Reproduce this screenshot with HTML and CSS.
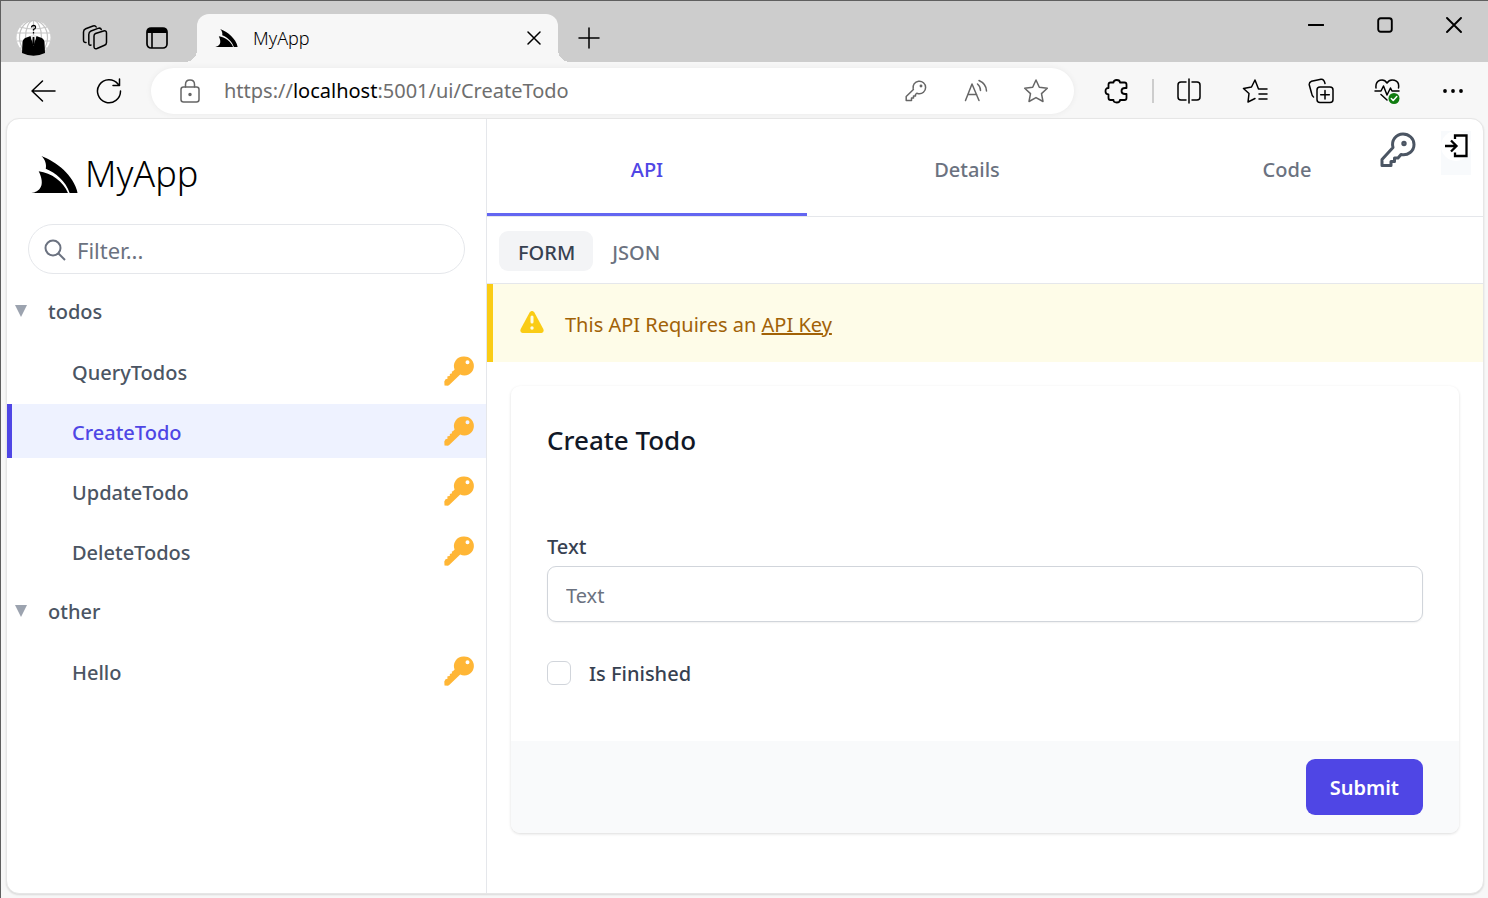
FILE: index.html
```html
<!DOCTYPE html>
<html lang="en">
<head>
<meta charset="utf-8">
<title>MyApp</title>
<link rel="stylesheet" href="styles.css">
</head>
<body>
<svg class="defs" aria-hidden="true">
  <symbol id="fin" viewBox="0 0 138 110"><path d="M30 0C75 18 125 55 138 110H114C103 75 72 50 43 38C46 25 41 10 30 0Z"/><path d="M22 45C60 50 95 75 109 110H0C25 106 43 88 22 45Z"/></symbol>
  <symbol id="key" viewBox="0 0 30 30"><path fill="#ffb636" fill-rule="evenodd" d="M19.500 0.500A9.500 9.500 0 0 0 10.600 13.600L9 15.200L7.800 15.500L8 17.300L5.800 17.900L5.900 19.700L3.300 20.400L3.500 22.700L1.500 23.300L.3 25.500L.5 29.500L4 29.700L5.500 28.800L16.200 18.500A9.500 9.500 0 1 0 19.500 .5ZM23.500 4.200a2 2 0 1 1 0 4a2 2 0 1 1 0-4Z"/></symbol>
</svg>
<header class="titlebar">
  <button class="strip-btn" aria-label="Profile"><svg width="35" height="36" viewBox="0 0 35 36"><circle cx="17.500" cy="17.500" r="17" fill="#fff"/><g fill="none" stroke="#c4c4c4" stroke-width="1.200"><ellipse cx="17.500" cy="17.500" rx="8" ry="17"/><ellipse cx="17.500" cy="17.500" rx="14" ry="17"/><path d="M17.500 0v35M1 13h33M1 21h33M4 7q13 4 27 0M4 28h27"/></g><path d="M6 33L6.500 22Q7 18 12 17L14.500 16L17.500 26L20.500 16L23 17Q28 18 28.500 22L29 33Q17.500 38.500 6 33Z"/><path d="M14.500 15L17.500 26L20.500 15Z" fill="#e8e8e8"/><path d="M16.700 17h1.600l.5 7l-1.300 2l-1.300-2Z"/><path d="M15.500 7.500q.2-2 2.200-2t1.800 1.900q0 1.200-2 2.100v1M17.500 12v1.500" fill="none" stroke="#000" stroke-width="1.300"/></svg></button>
  <button class="strip-btn" aria-label="Workspaces"><svg class="line" width="26" height="26" viewBox="0 0 26 26"><path d="M13.500 8.500L21.500 6Q24.500 5.200 24.500 8V17.500Q24.500 19.500 22.500 20.300L15 23.500Q12 24.500 12 21.500V11Q12 9.100 13.500 8.500ZM9 20Q6.800 21 6.800 18V9.500Q6.800 7 9 6L16 3.400Q18.600 2.500 19.300 4.500M4 17.500Q1.500 17.700 1.500 15V7Q1.500 4.700 3.700 3.800L11 1Q13.300 .3 14.200 2"/></svg></button>
  <button class="strip-btn" aria-label="Tab actions"><svg width="24" height="24" viewBox="0 0 24 24"><rect x="2" y="2" width="20" height="20" rx="4" fill="none" stroke="#000" stroke-width="1.700"/><path d="M2 7V5Q2 2 5 2H19Q22 2 22 5V7Z"/><path d="M7 7V22" stroke="#000" stroke-width="1.600"/></svg></button>
  <div class="tab">
    <svg class="tab-logo" viewBox="0 0 138 110"><use href="#fin"/></svg>
    <span class="tab-title">MyApp</span>
    <button class="tab-close" aria-label="Close tab"><svg class="line" width="14" height="14" viewBox="0 0 14 14"><path d="M1 1L13 13M13 1L1 13"/></svg></button>
  </div>
  <button class="strip-btn" aria-label="New tab"><svg class="line" width="22" height="22" viewBox="0 0 22 22"><path d="M11 1V21M1 11H21"/></svg></button>
  <div class="window-controls">
    <button aria-label="Minimize"><svg class="line bold" width="16" height="16" viewBox="0 0 16 16"><path d="M.5 8H15.500"/></svg></button>
    <button aria-label="Maximize"><svg class="line bold" width="16" height="16" viewBox="0 0 16 16"><rect x="1.200" y="1.200" width="13.600" height="13.600" rx="2.500"/></svg></button>
    <button aria-label="Close"><svg class="line bold" width="16" height="16" viewBox="0 0 16 16"><path d="M1 1L15 15M15 1L1 15"/></svg></button>
  </div>
</header>
<div class="toolbar">
  <button class="tool" aria-label="Back"><svg class="line" width="26" height="26" viewBox="0 0 26 26"><path d="M12.500 3L2 13L12.500 23M2 13H25"/></svg></button>
  <button class="tool" aria-label="Refresh"><svg class="line" width="26" height="26" viewBox="0 0 26 26"><path d="M24.500 13A11.500 11.500 0 1 1 22 6L23.500 7.500M23.500 1V7.500H17"/></svg></button>
  <div class="address">
    <svg class="line gray lock" width="20" height="24" viewBox="0 0 20 24"><rect x="1" y="8" width="18" height="15" rx="2.500"/><path d="M5.500 8V5.500Q5.500 1 10 1T14.500 5.500V8"/><circle cx="10" cy="15.500" r="1" fill="#666"/></svg>
    <div class="url" role="textbox" aria-label="Address" contenteditable="true" spellcheck="false">https://<b>localhost</b>:5001/ui/CreateTodo</div>
    <button aria-label="Passwords"><svg class="line gray" width="22" height="22" viewBox="0 0 22 22"><path d="M8.200 9A6.300 6.300 0 1 1 13.500 13.700L11.800 13.300L10.500 14.500V16H8.500V18H6.500V20.500H1.200V16.500L8.400 9.500Z"/><circle cx="16" cy="6" r=".7"/></svg></button>
    <button aria-label="Read aloud"><svg class="line gray" width="24" height="24" viewBox="0 0 24 24"><path d="M1.500 21.500L8 5L15 21.500M3.800 15.500H12.700M13.500 5Q16.500 7.500 16.500 11.500M15 1.500Q22.500 5 22.500 12"/></svg></button>
    <button aria-label="Add favorite"><svg class="line gray" width="26" height="26" viewBox="0 0 26 26"><path d="M13 2L16.300 9.200L24.300 10.200L18.500 15.600L20 23.500L13 19.600L6 23.500L7.500 15.600L1.700 10.200L9.700 9.200Z"/></svg></button>
  </div>
  <button class="tool wide" aria-label="Extensions"><svg class="line mid" width="26" height="26" viewBox="0 0 26 26"><path d="M6.500 4.500H9.500Q9.500 2 12.700 2T16 4.500H20.500Q22.500 4.500 22.500 6.500V10H21Q17.500 10 17.500 13T21 16H22.500V20Q22.500 22 20.500 22H16Q16 24.500 12.700 24.500T9.500 22H6.500Q4.500 22 4.500 20V16.500Q1.500 16.500 1.500 13.200T4.500 10V6.500Q4.500 4.500 6.500 4.500Z"/></svg></button>
  <span class="divider"></span>
  <button class="tool" aria-label="Split screen"><svg class="line" width="24" height="26" viewBox="0 0 24 26"><path d="M9 4H4Q1 4 1 7V19Q1 22 4 22H9M15 4H20Q23 4 23 7V19Q23 22 20 22H15M12 1V25"/></svg></button>
  <button class="tool" aria-label="Favorites"><svg class="line" width="26" height="26" viewBox="0 0 26 26"><path d="M25 11H16.500L13 2L9.500 9L1.500 10.500L7 15.500L6 24L13 20.500M17 16H25M17 21H25"/></svg></button>
  <button class="tool" aria-label="Collections"><svg class="line" width="26" height="26" viewBox="0 0 26 26"><rect x="9" y="9" width="16" height="15.500" rx="3"/><path d="M17 12.500V21M12.700 16.800H21.300M5.500 19Q4 18 3.500 15L1.300 7Q.8 4.300 3.500 3.300L13 1.200Q16 .8 17 5.500"/></svg></button>
  <button class="tool" aria-label="Browser essentials"><svg class="line" width="26" height="26" viewBox="0 0 26 26"><path d="M2 10C1 1 10 0 13 5C16 0 26 1 24.500 10M1 13H7L9.500 8L13 17L16.500 10L18 13H25M7 16.500L13 22"/><circle cx="20" cy="20.500" r="5.500" fill="#107c10" stroke="none"/><path d="M17.300 20.500L19.200 22.500L22.800 18.500" stroke="#fff"/></svg></button>
  <button class="tool" aria-label="Settings and more"><svg width="22" height="6" viewBox="0 0 22 6"><circle cx="3" cy="3" r="1.900"/><circle cx="11" cy="3" r="1.900"/><circle cx="19" cy="3" r="1.900"/></svg></button>
</div>
<div class="page">
  <nav class="sidebar">
    <a class="brand" href="#"><svg class="brand-logo" viewBox="0 0 138 110"><use href="#fin"/></svg><span>MyApp</span></a>
    <label class="filter">
      <svg width="22" height="22" viewBox="0 0 22 22" fill="none" stroke="#6b7280" stroke-width="2"><circle cx="9" cy="9" r="7.500"/><path d="M14.300 14.300L21 21"/></svg>
      <input type="search" placeholder="Filter..." aria-label="Filter">
    </label>
    <button class="group"><svg width="12" height="12" viewBox="0 0 12 12"><path d="M0 0H12L6 12Z"/></svg>todos</button>
    <a class="item" href="#">QueryTodos<svg class="key"><use href="#key"/></svg></a>
    <a class="item active" href="#">CreateTodo<svg class="key"><use href="#key"/></svg></a>
    <a class="item" href="#">UpdateTodo<svg class="key"><use href="#key"/></svg></a>
    <a class="item" href="#">DeleteTodos<svg class="key"><use href="#key"/></svg></a>
    <button class="group"><svg width="12" height="12" viewBox="0 0 12 12"><path d="M0 0H12L6 12Z"/></svg>other</button>
    <a class="item" href="#">Hello<svg class="key"><use href="#key"/></svg></a>
  </nav>
  <main class="main">
    <nav class="tabs">
      <a class="active" href="#">API</a>
      <a href="#">Details</a>
      <a href="#">Code</a>
    </nav>
    <div class="actions">
      <button class="api-key" aria-label="API key"><svg width="36" height="36" viewBox="0 0 36 36" fill="none" stroke="#4b5563" stroke-width="3" stroke-linejoin="round"><path d="M13 15.500C11 8.500 16 2 23 2C29 2 34 6.500 34 12.500C34 19 28 24 21 22.500L18 26H14.500V29.500H11V33.500H2V27.500Z"/><circle cx="24" cy="11.500" r="1.200"/></svg></button>
      <button class="signin" aria-label="Sign in"><svg width="30" height="30" viewBox="0 0 30 30"><circle cx="15" cy="15" r="15" fill="#fff"/><path d="M14 8V4.500H25.500V25H14V21.500M4 15H15M10 9.500L15.500 15L10 20.500" fill="none" stroke="#000" stroke-width="2.300"/></svg></button>
    </div>
    <div class="modes">
      <button class="active">FORM</button>
      <button>JSON</button>
    </div>
    <div class="alert">
      <svg width="24" height="22" viewBox="0 0 24 22"><path fill="#facc15" d="M9.600 1.400Q12-1.500 14.400 1.400L23.300 18Q24.500 21.500 21.500 22H2.500Q-.5 21.500.7 18Z"/><path d="M12 6V11" stroke="#fefce8" stroke-width="3" stroke-linecap="round"/><circle cx="12" cy="17" r="1.700" fill="#fefce8"/></svg>
      <p>This API Requires an <a href="#">API Key</a></p>
    </div>
    <form class="card">
      <div class="card-body">
        <h3>Create Todo</h3>
        <label class="field-label" for="text">Text</label>
        <input class="field" id="text" type="text" placeholder="Text">
        <div class="check"><input type="checkbox" id="done"><label for="done">Is Finished</label></div>
      </div>
      <div class="card-footer"><button type="submit">Submit</button></div>
    </form>
  </main>
</div>
</body>
</html>
```
FILE: styles.css
```css
* { box-sizing: border-box; }
body {
  margin: 0;
  min-height: 100vh;
  display: flex;
  flex-direction: column;
  background: #f7f7f7;
  border-top: 1px solid #5f5f5f;
  border-left: 1px solid #5f5f5f;
  font-family: "Noto Sans", "Open Sans", sans-serif;
  font-size: 20px;
  line-height: 30px;
  color: #000;
}
button { border: 0; padding: 0; background: none; font: inherit; color: inherit; cursor: pointer; }
a { color: inherit; text-decoration: none; }
svg { display: block; flex: none; }
.defs { position: absolute; width: 0; height: 0; }
.line { fill: none; stroke: #000; stroke-width: 1.5; stroke-linejoin: round; stroke-linecap: round; }
.line.mid { stroke-width: 1.8; }
.line.bold { stroke-width: 1.9; }
.line.gray { stroke: #666; }

.titlebar { display: flex; height: 61px; padding: 12px 0 0 1px; background: #cdcdcd; }
.strip-btn { width: 62px; display: flex; align-items: center; justify-content: center; }
.tab {
  position: relative;
  display: flex;
  align-items: center;
  width: 361px;
  margin: 1px 0 0 9px;
  padding: 0 16px 0 18px;
  background: #f7f7f7;
  border-radius: 12px 12px 0 0;
}
.tab::before, .tab::after { content: ""; position: absolute; bottom: 0; width: 12px; height: 12px; }
.tab::before { right: 100%; background: radial-gradient(circle at 0 0, #cdcdcd 12px, #f7f7f7 12px); }
.tab::after { left: 100%; background: radial-gradient(circle at 100% 0, #cdcdcd 12px, #f7f7f7 12px); }
.tab-logo { width: 23px; height: 18px; }
.tab-title { flex: 1; margin-left: 15px; font-size: 18px; font-weight: 300; }
.tab-close { padding: 1px; }
.window-controls { display: flex; height: 48px; margin: -12px 0 0 auto; }
.window-controls button { width: 69px; display: flex; align-items: center; justify-content: center; }

.toolbar { display: flex; align-items: center; height: 56px; padding: 1px 2px 0 9px; }
.tool { width: 66px; height: 46px; display: flex; align-items: center; justify-content: center; }
.tool.wide { width: 70px; }
.divider { width: 2px; height: 24px; margin-right: 2px; background: #cdcdcd; }
.address {
  flex: 1;
  display: flex;
  align-items: center;
  height: 46px;
  margin: 0 8px 0 9px;
  padding: 0 8px 0 29px;
  background: #fff;
  border-radius: 23px;
  box-shadow: 0 0 6px rgba(0, 0, 0, .06);
}
.address button { width: 60px; display: flex; justify-content: center; }
.url { flex: 1; margin-left: 24px; color: #6e6e6e; outline: none; white-space: nowrap; }
.url b { font-weight: 400; color: #000; }

.page {
  flex: 1;
  display: flex;
  margin: 0 4px 4px 5px;
  background: #fff;
  border: 1px solid #e6e6e6;
  border-radius: 13px;
  box-shadow: 0 1px 2px rgba(0, 0, 0, .12);
  overflow: hidden;
}
.sidebar { width: 480px; border-right: 1px solid #e5e7eb; color: #4b5563; font-weight: 500; }
.brand { display: flex; align-items: center; gap: 7px; margin: 28px 24px 0; height: 54px; color: #000; font-size: 36px; line-height: 54px; font-weight: 300; }
.brand-logo { width: 47px; height: 37px; }
.filter {
  display: flex;
  align-items: center;
  gap: 11px;
  height: 50px;
  margin: 23px 21px 10px;
  padding: 2px 15px 0;
  border: 1px solid #e5e7eb;
  border-radius: 25px;
}
.filter input { flex: 1; min-width: 0; border: 0; padding: 0; outline: none; background: none; font: inherit; font-size: 22px; font-weight: 400; }
input::placeholder { color: #6b7280; opacity: 1; }
.group { display: flex; align-items: center; gap: 21px; width: 100%; height: 54px; padding: 2px 0 0 8px; fill: #9ca3af; font-weight: 500; }
.group svg { margin-bottom: 2px; }
.item { display: flex; align-items: center; justify-content: space-between; height: 54px; margin: 6px 0; padding: 3px 12px 0 60px; border-left: 5px solid transparent; }
.item.active { background: #eef2ff; border-color: #4f46e5; color: #4f46e5; }
.key { width: 30px; height: 30px; margin-bottom: 4px; }

.main { flex: 1; min-width: 0; position: relative; }
.tabs { display: flex; height: 98px; padding-right: 36px; border-bottom: 1px solid #e5e7eb; color: #6b7280; font-weight: 500; }
.tabs a { flex: 1; display: flex; align-items: center; justify-content: center; border-top: 8px solid transparent; border-bottom: 3px solid transparent; }
.tabs .active { color: #4f46e5; border-bottom-color: #6366f1; }
.actions { position: absolute; top: 12px; right: 12px; display: flex; align-items: flex-start; gap: 25px; }
.api-key { padding-top: 1px; }
.signin { height: 44px; display: flex; background: #f8fafc; }
.modes { display: flex; padding: 14px 12px 12px; border-bottom: 1px solid #e5e7eb; }
.modes button { height: 40px; padding: 3px 18px 0 19px; border-radius: 9px; color: #6b7280; font-weight: 500; }
.modes .active { background: #f3f4f6; color: #374151; }
.alert { display: flex; align-items: center; gap: 21px; padding: 25px 27px 23px; background: #fefce8; border-left: 6px solid #facc15; color: #a16207; }
.alert svg { margin-bottom: 4px; }
.alert p { margin: 0; padding-top: 2px; line-height: 28px; }
.alert a { text-decoration: underline; }
.card { margin: 24px; border-radius: 9px; overflow: hidden; box-shadow: 0 1px 3px rgba(0, 0, 0, .14); color: #374151; }
.card-body { padding: 36px 36px 52px; font-weight: 500; }
.card h3 { margin: 0; font-size: 26px; line-height: 36px; font-weight: 500; color: #111827; }
.field-label { display: block; margin-top: 72px; padding-bottom: 2px; line-height: 34px; }
.field { display: block; width: 100%; height: 56px; padding: 2px 18px 0; border: 1px solid #d1d5db; border-radius: 9px; font: inherit; font-weight: 400; box-shadow: 0 1px 2px rgba(0, 0, 0, .06); }
.check { display: flex; align-items: center; gap: 18px; margin-top: 35px; }
.check input { appearance: none; width: 24px; height: 24px; margin: 0; border: 1px solid #d1d5db; border-radius: 6px; background: #fff; }
.check label { padding-top: 2px; }
.card-footer { display: flex; justify-content: flex-end; padding: 18px 36px; background: #f9fafb; }
.card-footer button { height: 56px; padding: 2px 24px 0; border-radius: 9px; background: #4f46e5; color: #fff; font-weight: 600; }
```
